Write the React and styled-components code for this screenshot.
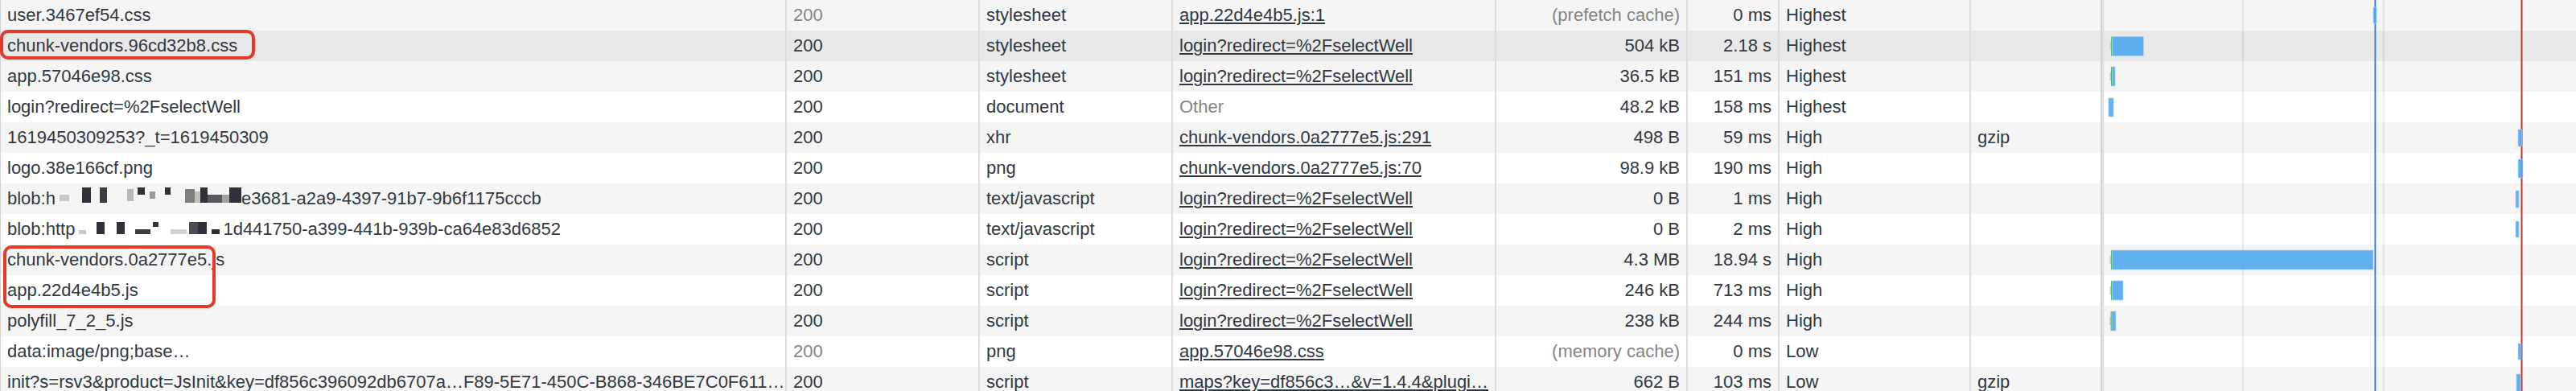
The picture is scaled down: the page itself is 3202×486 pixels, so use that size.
import React from "react";
import styled, { createGlobalStyle } from "styled-components";

const GlobalStyle = createGlobalStyle`
  html, body {
    margin: 0;
    padding: 0;
    background: #fff;
    overflow: hidden;
  }
  body {
    font-family: "Liberation Sans", Arial, Helvetica, sans-serif;
  }
`;

const COLS = "976px 240px 240px 402px 238px 114px 238px 163px 1fr";
const ROW_H = 38;

const Table = styled.div`
  position: relative;
  width: 3202px;
  font-size: 22px;
  color: #303942;
`;

const Row = styled.div`
  display: grid;
  grid-template-columns: ${COLS};
  height: ${ROW_H}px;
  line-height: ${ROW_H}px;
  background: ${(p) =>
    p.$tone === "hover" ? "#e8e8e8" : p.$tone === "gray" ? "#f5f5f5" : "#ffffff"};
`;

const Cell = styled.div`
  box-sizing: border-box;
  min-width: 0;
  padding: 0 8px;
  border-left: 2px solid #dddddd;
  white-space: nowrap;
  overflow: hidden;
  text-align: ${(p) => (p.$right ? "right" : "left")};
  color: ${(p) => (p.$muted ? "#858585" : "inherit")};
`;

const NameCell = styled(Cell)`
  border-left: 1px solid #d2d2d2;
`;

const WaterCell = styled(Cell)`
  border-left: 2px solid #d3d3d3;
  padding: 0;
`;

const Link = styled.span`
  text-decoration: underline;
  text-underline-offset: 2px;
`;

const Mosaic = styled.span`
  display: inline-flex;
  align-items: flex-start;
  vertical-align: top;
  height: ${ROW_H}px;
`;

const Tile = styled.span`
  flex: none;
  width: ${(p) => p.$w}px;
  height: ${(p) => p.$h}px;
  margin-top: ${(p) => p.$y}px;
  background: ${(p) => p.$c};
`;

const Waterfall = styled.svg`
  position: absolute;
  top: 0;
  left: 2611px;
  pointer-events: none;
`;

const Marker = styled.div`
  position: absolute;
  box-sizing: border-box;
  border: 4px solid #e5392c;
  border-radius: 10px;
  pointer-events: none;
`;

const D = "#2f3339";

// [x0, x1, y, h, color] — blurred parts of blob urls
const mosaic7 = [
  [74, 86, 14, 8, "#c9c9c9"],
  [102, 113, 5, 19, D],
  [124, 133, 5, 19, "#3a3e44"],
  [158, 166, 7, 15, "#b8b8b8"],
  [171, 180, 5, 9, D],
  [186, 193, 10, 9, "#9a9a9a"],
  [205, 212, 5, 9, D],
  [230, 242, 7, 17, "#7e7e7e"],
  [242, 249, 10, 14, "#c0c0c0"],
  [249, 258, 5, 19, D],
  [258, 276, 14, 10, "#555a60"],
  [276, 285, 14, 10, "#a0a0a0"],
  [285, 300, 5, 19, D],
];

const mosaic8 = [
  [98, 107, 20, 5, "#c8c8c8"],
  [120, 130, 10, 15, D],
  [145, 155, 10, 15, D],
  [168, 187, 19, 6, "#3a3e44"],
  [190, 197, 10, 6, D],
  [212, 232, 19, 6, "#d0d0d0"],
  [235, 246, 10, 15, "#4a4e54"],
  [246, 257, 10, 15, D],
  [263, 273, 19, 6, D],
];

const Blur = ({ start, end, tiles }) => {
  let cur = start;
  const parts = [];
  tiles.forEach(([x0, x1, y, h, c], i) => {
    if (x0 > cur) parts.push(<Tile key={"g" + i} $w={x0 - cur} $h={0} $y={0} $c="transparent" />);
    parts.push(<Tile key={i} $w={x1 - x0} $h={h} $y={y} $c={c} />);
    cur = x1;
  });
  if (end > cur) parts.push(<Tile key="end" $w={end - cur} $h={0} $y={0} $c="transparent" />);
  return <Mosaic>{parts}</Mosaic>;
};

const LOGIN = "login?redirect=%2FselectWell";

const rows = [
  { name: "user.3467ef54.css", mutedStatus: true, type: "stylesheet", init: "app.22d4e4b5.js:1", size: "(prefetch cache)", mutedSize: true, time: "0 ms", prio: "Highest" },
  { name: "chunk-vendors.96cd32b8.css", type: "stylesheet", init: LOGIN, size: "504 kB", time: "2.18 s", prio: "Highest" },
  { name: "app.57046e98.css", type: "stylesheet", init: LOGIN, size: "36.5 kB", time: "151 ms", prio: "Highest" },
  { name: LOGIN, type: "document", init: "Other", plainInit: true, size: "48.2 kB", time: "158 ms", prio: "Highest" },
  { name: "1619450309253?_t=1619450309", type: "xhr", init: "chunk-vendors.0a2777e5.js:291", size: "498 B", time: "59 ms", prio: "High", enc: "gzip" },
  { name: "logo.38e166cf.png", type: "png", init: "chunk-vendors.0a2777e5.js:70", size: "98.9 kB", time: "190 ms", prio: "High" },
  {
    name: (
      <>
        blob:h<Blur start={69} end={300} tiles={mosaic7} />e3681-a2a9-4397-91b7-9b6f1175cccb
      </>
    ),
    type: "text/javascript", init: LOGIN, size: "0 B", time: "1 ms", prio: "High",
  },
  {
    name: (
      <>
        blob:http<Blur start={93} end={277} tiles={mosaic8} />1d441750-a399-441b-939b-ca64e83d6852
      </>
    ),
    type: "text/javascript", init: LOGIN, size: "0 B", time: "2 ms", prio: "High",
  },
  { name: "chunk-vendors.0a2777e5.js", type: "script", init: LOGIN, size: "4.3 MB", time: "18.94 s", prio: "High" },
  { name: "app.22d4e4b5.js", type: "script", init: LOGIN, size: "246 kB", time: "713 ms", prio: "High" },
  { name: "polyfill_7_2_5.js", type: "script", init: LOGIN, size: "238 kB", time: "244 ms", prio: "High" },
  { name: "data:image/png;base…", mutedStatus: true, type: "png", init: "app.57046e98.css", size: "(memory cache)", mutedSize: true, time: "0 ms", prio: "Low" },
  { name: "init?s=rsv3&product=JsInit&key=df856c396092db6707a…F89-5E71-450C-B868-346BE7C0F611…", type: "script", init: "maps?key=df856c3…&v=1.4.4&plugi…", size: "662 B", time: "103 ms", prio: "Low", enc: "gzip" },
];

// waterfall bars in page x coordinates: [x0, x1, y0, y1, hasGreen]
const bars = [
  [2950, 2954, 9, 29, false],
  [2625.5, 2664.5, 45.5, 69.5, true],
  [2625.3, 2629, 83, 107, true],
  [2621, 2627, 122, 145, false],
  [3130, 3134.5, 161, 182, false],
  [3130, 3136, 198, 221, false],
  [3127, 3131, 237, 258, false],
  [3127, 3131, 275, 295, false],
  [2625.3, 2950, 311, 335, true],
  [2625.3, 2639, 349, 373, true],
  [2625, 2630, 387, 411, true],
  [3130, 3134, 427, 447, false],
  [3128, 3133, 465, 490, false],
];

const X0 = 2611;
const WF_W = 3202 - X0;
const WF_H = rows.length * ROW_H;

const WaterfallChart = () => (
  <Waterfall width={WF_W} height={WF_H} viewBox={`0 0 ${WF_W} ${WF_H}`}>
    <rect x={2} y={0} width={2.4} height={WF_H} fill="#e0e0e0" />
    <rect x={2787 - X0} y={0} width={1.6} height={WF_H} fill="rgba(0,0,0,0.09)" />
    <rect x={2962 - X0} y={0} width={1.6} height={WF_H} fill="rgba(0,0,0,0.09)" />
    <rect x={2951.5 - X0} y={0} width={1.8} height={WF_H} fill="#3574dc" />
    <rect x={3133.5 - X0} y={0} width={2} height={WF_H} fill="#b3382d" />
    {bars.map(([a, b, y0, y1, green], i) => (
      <g key={i}>
        {green && (
          <>
            <rect x={a - 3 - X0} y={y0 + 7} width={1.6} height={y1 - y0 - 14} fill="#cfcfcf" />
            <rect x={a - 1.4 - X0} y={y0} width={1.4} height={y1 - y0} fill="#53b85f" />
          </>
        )}
        <rect
          x={a - X0}
          y={y0}
          width={b - a}
          height={y1 - y0}
          fill="#4ca6ed"
          fillOpacity={0.88}
          stroke="#a9d4f6"
          strokeWidth={0.7}
        />
      </g>
    ))}
  </Waterfall>
);

export default function App() {
  return (
    <>
      <GlobalStyle />
      <Table>
        {rows.map((r, i) => (
          <Row key={i} $tone={i === 1 ? "hover" : i % 2 === 0 ? "gray" : "white"}>
            <NameCell>{r.name}</NameCell>
            <Cell $muted={r.mutedStatus}>200</Cell>
            <Cell>{r.type}</Cell>
            <Cell $muted={r.plainInit}>{r.plainInit ? r.init : <Link>{r.init}</Link>}</Cell>
            <Cell $right $muted={r.mutedSize}>{r.size}</Cell>
            <Cell $right>{r.time}</Cell>
            <Cell>{r.prio}</Cell>
            <Cell>{r.enc || ""}</Cell>
            <WaterCell />
          </Row>
        ))}
        <WaterfallChart />
        <Marker style={{ left: 0, top: 36.5, width: 317, height: 37.5 }} />
        <Marker style={{ left: 4, top: 305, width: 264, height: 78 }} />
      </Table>
    </>
  );
}
